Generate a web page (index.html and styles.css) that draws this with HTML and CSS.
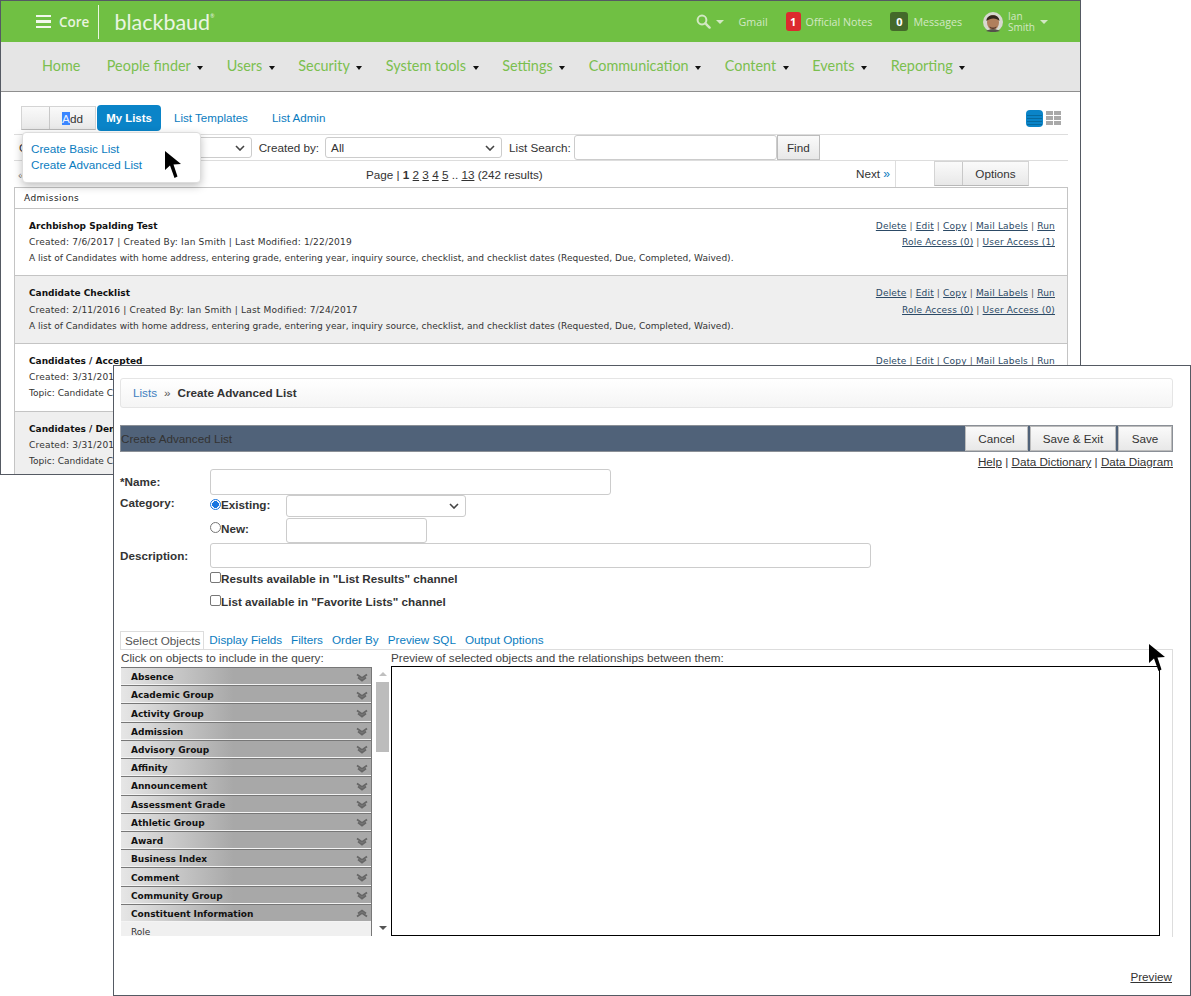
FILE: index.html
```html
<!DOCTYPE html>
<html lang="en">
<head>
  <meta charset="UTF-8" />
  <title>Create Advanced List</title>
  <link rel="stylesheet" href="styles.css">
</head>
<body>
  <div class="window list-window">
    <header class="topbar">
      <div class="brand">
        <span class="burger"><i></i><i></i><i></i></span>
        <span class="core">Core</span>
        <span class="logo">blackbaud<sup>®</sup></span>
      </div>
      <div class="top-tools">
        <svg class="search-icon" width="15" height="15" viewBox="0 0 15 15"><circle cx="6" cy="6" r="4.4" fill="none" stroke="#d3e8c4" stroke-width="2"/><path d="M9.4 9.4L13.6 13.6" stroke="#d3e8c4" stroke-width="2.4" stroke-linecap="round"/></svg>
        <span class="tri light search-tri"></span>
        <span class="top-link gmail">Gmail</span>
        <span class="badge red">1</span>
        <span class="top-link notes">Official Notes</span>
        <span class="badge dark">0</span>
        <span class="top-link msgs">Messages</span>
        <svg class="avatar" width="20" height="20" viewBox="0 0 20 20"><circle cx="10" cy="10" r="10" fill="#d8d8d0"/><ellipse cx="10" cy="10.5" rx="6" ry="7.5" fill="#b07f5c"/><path d="M3.5 9C3 2 16 1 16.5 9C14 5.500 7 5.500 3.500 9Z" fill="#33261d"/><path d="M6.500 14C8 16 12 16 13.500 14L13 16C11 17.500 9 17.500 7 16Z" fill="#5c4030"/><path d="M3 19C6 16.500 14 16.500 17 19C13 20.500 7 20.500 3 19Z" fill="#55514b"/></svg>
        <span class="top-user">Ian<br>Smith</span>
        <span class="tri light"></span>
      </div>
    </header>

    <nav class="mainnav">
      <a>Home</a>
      <a>People finder <b class="tri"></b></a>
      <a>Users <b class="tri"></b></a>
      <a>Security <b class="tri"></b></a>
      <a>System tools <b class="tri"></b></a>
      <a>Settings <b class="tri"></b></a>
      <a>Communication <b class="tri"></b></a>
      <a>Content <b class="tri"></b></a>
      <a>Events <b class="tri"></b></a>
      <a>Reporting <b class="tri"></b></a>
    </nav>

    <div class="list-body">
      <div class="tabs-row">
        <div class="split-btn add-btn"><span class="split-blank"></span><span class="split-label"><mark>A</mark>dd</span></div>
        <a class="tab active">My Lists</a>
        <a class="tab">List Templates</a>
        <a class="tab">List Admin</a>
        <div class="view-icons">
          <svg width="17" height="17" viewBox="0 0 17 17"><rect width="17" height="17" rx="4" fill="#0a84c8"/><path d="M1 5.500H16M1 8.500H16M1 11.500H16M1 14.500H16" stroke="#066a9f"/></svg>
          <svg width="15" height="14" viewBox="0 0 15 14"><path d="M0 0H7V4H0ZM8 0H15V4H8ZM0 5H7V9H0ZM8 5H15V9H8ZM0 10H7V14H0ZM8 10H15V14H8Z" fill="#a9a9a9"/></svg>
        </div>
      </div>

      <div class="filter-row">
        <label class="filter-cat">Category:</label>
        <span class="fake-select cat-select"><svg class="chev" width="10" height="6" viewBox="0 0 10 6"><path d="M1 1L5 5L9 1" fill="none" stroke="#444" stroke-width="1.6"/></svg></span>
        <label class="created-label">Created by:</label>
        <span class="fake-select by-select">All<svg class="chev" width="10" height="6" viewBox="0 0 10 6"><path d="M1 1L5 5L9 1" fill="none" stroke="#444" stroke-width="1.6"/></svg></span>
        <label class="search-label">List Search:</label>
        <span class="fake-input search-input"></span>
        <span class="btn find-btn">Find</span>
      </div>

      <div class="pager-row">
        <span class="prev">«</span>
        <span class="pages">Page | <b>1</b> <u>2</u> <u>3</u> <u>4</u> <u>5</u> .. <u>13</u> (242 results)</span>
        <span class="next">Next <small>»</small></span>
        <span class="pager-side">
          <span class="split-btn options-btn"><span class="split-blank"></span><span class="split-label">Options</span></span>
        </span>
      </div>

      <div class="list-table">
        <div class="group-head">Admissions</div>

        <div class="list-row first">
          <div class="row-text">
            <h4>Archbishop Spalding Test</h4>
            <p class="meta">Created: 7/6/2017 | Created By: Ian Smith | Last Modified: 1/22/2019</p>
            <p>A list of Candidates with home address, entering grade, entering year, inquiry source, checklist, and checklist dates (Requested, Due, Completed, Waived).</p>
          </div>
          <div class="row-links">
            <p><u>Delete</u> | <u>Edit</u> | <u>Copy</u> | <u>Mail Labels</u> | <u>Run</u></p>
            <p><u>Role Access (0)</u> | <u>User Access (1)</u></p>
          </div>
        </div>

        <div class="list-row alt tall">
          <div class="row-text">
            <h4>Candidate Checklist</h4>
            <p class="meta">Created: 2/11/2016 | Created By: Ian Smith | Last Modified: 7/24/2017</p>
            <p>A list of Candidates with home address, entering grade, entering year, inquiry source, checklist, and checklist dates (Requested, Due, Completed, Waived).</p>
          </div>
          <div class="row-links">
            <p><u>Delete</u> | <u>Edit</u> | <u>Copy</u> | <u>Mail Labels</u> | <u>Run</u></p>
            <p><u>Role Access (0)</u> | <u>User Access (0)</u></p>
          </div>
        </div>

        <div class="list-row">
          <div class="row-text">
            <h4>Candidates / Accepted</h4>
            <p class="meta">Created: 3/31/2016 | Created By: Ian Smith</p>
            <p>Topic: Candidate Checklist</p>
          </div>
          <div class="row-links">
            <p><u>Delete</u> | <u>Edit</u> | <u>Copy</u> | <u>Mail Labels</u> | <u>Run</u></p>
          </div>
        </div>

        <div class="list-row alt">
          <div class="row-text">
            <h4>Candidates / Denied</h4>
            <p class="meta">Created: 3/31/2016 | Created By: Ian Smith</p>
            <p>Topic: Candidate Checklist</p>
          </div>
        </div>
      </div>
    </div>

    <div class="add-menu">
      <a>Create Basic List</a>
      <a>Create Advanced List</a>
    </div>
  </div>

  <div class="window create-window">
    <div class="breadcrumb"><a>Lists</a><span class="crumb-sep">»</span><b>Create Advanced List</b></div>

    <div class="title-bar">
      <span class="title-text">Create Advanced List</span>
      <div class="title-btns">
        <span class="btn cancel-btn">Cancel</span>
        <span class="btn exit-btn">Save &amp; Exit</span>
        <span class="btn save-btn">Save</span>
      </div>
    </div>
    <div class="help-links"><u>Help</u> | <u>Data Dictionary</u> | <u>Data Diagram</u></div>

    <form class="create-form">
      <div class="form-row name-row">
        <label>*Name:</label>
        <span class="fake-input name-input"></span>
      </div>
      <div class="form-row category-row">
        <label>Category:</label>
        <div class="category-opts">
          <div class="cat-opt existing-opt">
            <span class="radio on"></span><b>Existing:</b>
            <span class="fake-select existing-select"><svg class="chev" width="10" height="6" viewBox="0 0 10 6"><path d="M1 1L5 5L9 1" fill="none" stroke="#444" stroke-width="1.6"/></svg></span>
          </div>
          <div class="cat-opt new-opt">
            <span class="radio"></span><b>New:</b>
            <span class="fake-input new-input"></span>
          </div>
        </div>
      </div>
      <div class="form-row desc-row">
        <label>Description:</label>
        <span class="fake-input desc-input"></span>
      </div>
      <div class="check-row first"><span class="check"></span>Results available in "List Results" channel</div>
      <div class="check-row"><span class="check"></span>List available in "Favorite Lists" channel</div>
    </form>

    <div class="object-tabs">
      <span class="object-tab active">Select Objects</span>
      <a>Display Fields</a>
      <a>Filters</a>
      <a>Order By</a>
      <a>Preview SQL</a>
      <a>Output Options</a>
    </div>

    <div class="object-panel">
      <div class="panel-labels">
        <span class="left-label">Click on objects to include in the query:</span>
        <span>Preview of selected objects and the relationships between them:</span>
      </div>
      <div class="panel-main">
        <div class="accordion">
          <div class="acc-item">Absence<svg width="12" height="9" viewBox="0 0 12 9"><path d="M1 1.500L6 5L11 1.500M2 4.500L6 7.500L10 4.500" fill="none" stroke="#666" stroke-width="1.8"/></svg></div>
          <div class="acc-item">Academic Group<svg width="12" height="9" viewBox="0 0 12 9"><path d="M1 1.500L6 5L11 1.500M2 4.500L6 7.500L10 4.500" fill="none" stroke="#666" stroke-width="1.8"/></svg></div>
          <div class="acc-item">Activity Group<svg width="12" height="9" viewBox="0 0 12 9"><path d="M1 1.500L6 5L11 1.500M2 4.500L6 7.500L10 4.500" fill="none" stroke="#666" stroke-width="1.8"/></svg></div>
          <div class="acc-item">Admission<svg width="12" height="9" viewBox="0 0 12 9"><path d="M1 1.500L6 5L11 1.500M2 4.500L6 7.500L10 4.500" fill="none" stroke="#666" stroke-width="1.8"/></svg></div>
          <div class="acc-item">Advisory Group<svg width="12" height="9" viewBox="0 0 12 9"><path d="M1 1.500L6 5L11 1.500M2 4.500L6 7.500L10 4.500" fill="none" stroke="#666" stroke-width="1.8"/></svg></div>
          <div class="acc-item">Affinity<svg width="12" height="9" viewBox="0 0 12 9"><path d="M1 1.500L6 5L11 1.500M2 4.500L6 7.500L10 4.500" fill="none" stroke="#666" stroke-width="1.8"/></svg></div>
          <div class="acc-item">Announcement<svg width="12" height="9" viewBox="0 0 12 9"><path d="M1 1.500L6 5L11 1.500M2 4.500L6 7.500L10 4.500" fill="none" stroke="#666" stroke-width="1.8"/></svg></div>
          <div class="acc-item">Assessment Grade<svg width="12" height="9" viewBox="0 0 12 9"><path d="M1 1.500L6 5L11 1.500M2 4.500L6 7.500L10 4.500" fill="none" stroke="#666" stroke-width="1.8"/></svg></div>
          <div class="acc-item">Athletic Group<svg width="12" height="9" viewBox="0 0 12 9"><path d="M1 1.500L6 5L11 1.500M2 4.500L6 7.500L10 4.500" fill="none" stroke="#666" stroke-width="1.8"/></svg></div>
          <div class="acc-item">Award<svg width="12" height="9" viewBox="0 0 12 9"><path d="M1 1.500L6 5L11 1.500M2 4.500L6 7.500L10 4.500" fill="none" stroke="#666" stroke-width="1.8"/></svg></div>
          <div class="acc-item">Business Index<svg width="12" height="9" viewBox="0 0 12 9"><path d="M1 1.500L6 5L11 1.500M2 4.500L6 7.500L10 4.500" fill="none" stroke="#666" stroke-width="1.8"/></svg></div>
          <div class="acc-item">Comment<svg width="12" height="9" viewBox="0 0 12 9"><path d="M1 1.500L6 5L11 1.500M2 4.500L6 7.500L10 4.500" fill="none" stroke="#666" stroke-width="1.8"/></svg></div>
          <div class="acc-item">Community Group<svg width="12" height="9" viewBox="0 0 12 9"><path d="M1 1.500L6 5L11 1.500M2 4.500L6 7.500L10 4.500" fill="none" stroke="#666" stroke-width="1.8"/></svg></div>
          <div class="acc-item">Constituent Information<svg width="12" height="9" viewBox="0 0 12 9"><path d="M1 7.500L6 4L11 7.500M2 4.500L6 1.500L10 4.500" fill="none" stroke="#666" stroke-width="1.8"/></svg></div>
          <div class="acc-sub">Role</div>
        </div>
        <div class="scrollbar">
          <span class="scroll-up"></span>
          <span class="scroll-thumb"></span>
          <span class="scroll-down"></span>
        </div>
        <div class="preview-box"></div>
      </div>
    </div>

    <div class="preview-link"><u>Preview</u></div>
  </div>

  <svg class="cursor cursor-menu" width="18" height="29" viewBox="0 0 18 29"><path d="M1 1L1 20L6 15.500L10.500 28L13.500 26.500L9.500 14.500L17 14Z" fill="#000"/></svg>
  <svg class="cursor cursor-panel" width="18" height="29" viewBox="0 0 18 29"><path d="M1 1L1 20L6 15.500L10.500 28L13.500 26.500L9.500 14.500L17 14Z" fill="#000"/></svg>
</body>
</html>
```

FILE: styles.css
```css
* {
  box-sizing: border-box;
}

html, body {
  margin: 0;
  height: 996px;
  overflow: hidden;
  background: #fff;
}

body {
  position: relative;
  font-family: 'Liberation Sans', Arial, sans-serif;
  font-size: 11.7px;
  color: #333;
}

p, h4 {
  margin: 0;
}

.window {
  position: absolute;
  background: #fff;
  border: 1px solid #555a63;
}

.list-window {
  left: 0;
  top: 0;
  width: 1081px;
  height: 475px;
  overflow: hidden;
}

.create-window {
  left: 113px;
  top: 365px;
  width: 1078px;
  height: 631px;
  padding: 12px 17px 0 6px;
  z-index: 2;
}

/* top green bar */
.topbar {
  height: 41px;
  background: #70c043;
  display: flex;
  align-items: center;
  justify-content: space-between;
  color: #fff;
}

.brand {
  display: flex;
  align-items: center;
  padding-left: 35px;
  height: 100%;
}

.burger {
  display: flex;
  flex-direction: column;
  gap: 3px;
  width: 15px;
}

.burger i {
  height: 2.5px;
  background: #f2f8ec;
}

.core {
  font-family: 'Open Sans', sans-serif;
  font-weight: 600;
  font-size: 13.5px;
  color: #e8f4df;
  margin-left: 8px;
  padding-right: 9px;
  border-right: 1px solid #eaf5e2;
  height: 34px;
  line-height: 34px;
}

.logo {
  font-family: Lato, sans-serif;
  font-weight: 400;
  font-size: 21.5px;
  color: #eaf5e2;
  margin-left: 15px;
}

.logo sup {
  font-size: 5px;
  vertical-align: 12px;
  line-height: 0;
}

.top-tools {
  display: flex;
  align-items: center;
  padding-right: 32px;
  font-family: 'Open Sans', sans-serif;
}

.top-link {
  font-size: 10.7px;
  color: #d3e8c4;
}

.tri {
  display: inline-block;
  width: 0;
  height: 0;
  border-left: 3.5px solid transparent;
  border-right: 3.5px solid transparent;
  border-top: 4px solid #111;
  vertical-align: 1px;
  margin-left: 3px;
}

.tri.light {
  border-top-color: #d3e8c4;
  border-left-width: 4px;
  border-right-width: 4px;
}

.search-tri {
  margin-left: 5px;
}

.gmail {
  margin-left: 15px;
}

.badge {
  width: 15px;
  height: 19px;
  border-radius: 3px;
  color: #fff;
  font-size: 11px;
  font-weight: 700;
  display: flex;
  align-items: center;
  justify-content: center;
}

.badge.red {
  background: #dc2a2e;
  margin-left: 18px;
}

.badge.dark {
  background: #44692a;
  width: 18px;
  margin-left: 18px;
}

.notes, .msgs {
  margin-left: 5px;
}

.avatar {
  margin-left: 21px;
}

.top-user {
  font-size: 10px;
  line-height: 11px;
  color: #d3e8c4;
  margin-left: 5px;
  margin-right: 2px;
}

/* grey nav */
.mainnav {
  height: 50px;
  background: #e5e5e5;
  border-bottom: 1px solid #8f8f8f;
  display: flex;
  align-items: center;
  gap: 23.5px;
  padding: 0 0 3px 41px;
  font-family: Lato, sans-serif;
  font-size: 14.4px;
  color: #7bbf4f;
}

.mainnav a:first-child {
  margin-right: 3px;
}

/* list page */
.list-body {
  padding: 13px 12px 0 13px;
}

.tabs-row {
  display: flex;
  align-items: center;
  height: 26px;
  padding-left: 7px;
}

.split-btn {
  display: flex;
  background: linear-gradient(#fafafa, #e8e8e8);
  border: 1px solid #d4d4d4;
  border-bottom-color: #b8b8b8;
  height: 24px;
}

.split-blank {
  width: 28px;
  border-right: 1px solid #c8c8c8;
}

.split-label {
  flex: 1;
  display: flex;
  align-items: center;
  justify-content: center;
}

.add-btn {
  width: 75px;
}

mark {
  background: #3a86ff;
  color: #e8f0ff;
}

.tab {
  color: #0a7cc0;
  padding: 0 12px;
  line-height: 26px;
  height: 26px;
  font-size: 11.6px;
}

.tab.active {
  background: #0a84c8;
  color: #fff;
  font-weight: 700;
  font-size: 11.4px;
  border-radius: 4px;
  width: 64px;
  padding: 0;
  text-align: center;
  margin: 0 1px;
}

.view-icons {
  margin-left: auto;
  padding-right: 7px;
  display: flex;
  align-items: center;
  gap: 3px;
}

.filter-row {
  margin-top: 3px;
  height: 27px;
  border-top: 1px solid #ddd;
  border-bottom: 1px solid #ddd;
  display: flex;
  align-items: center;
  padding: 0 0 1px 5px;
}

.fake-select, .fake-input {
  display: flex;
  align-items: center;
  position: relative;
  background: #fff;
  border: 1px solid #ccc;
  border-radius: 3px;
}

.fake-select {
  height: 21px;
  padding-left: 5px;
}

.chev {
  position: absolute;
  right: 6px;
  top: 7px;
}

.cat-select {
  width: 177px;
  margin-left: 5px;
}

.created-label {
  margin-left: 7px;
}

.by-select {
  width: 177px;
  margin-left: 6px;
}

.search-label {
  margin-left: 7px;
}

.search-input {
  width: 203px;
  height: 25px;
  margin-left: 3px;
}

.btn {
  display: flex;
  align-items: center;
  justify-content: center;
  background: linear-gradient(#fafafa, #e8e8e8);
  border: 1px solid #bcbcbc;
}

.find-btn {
  width: 43px;
  height: 25px;
}

.pager-row {
  height: 26px;
  display: flex;
  align-items: center;
  position: relative;
}

.prev {
  color: #888;
  margin-left: 4px;
}

.pages {
  position: absolute;
  left: 352px;
}

.next {
  position: absolute;
  left: 842px;
}

.next small {
  color: #0a7cc0;
  font-size: 12px;
}

.pager-side {
  position: absolute;
  left: 881px;
  top: 0;
  height: 26px;
  border-left: 1px solid #ddd;
  padding-left: 38px;
}

.options-btn {
  width: 95px;
  height: 25px;
}

.list-table {
  border: 1px solid #c4c4c4;
}

.group-head {
  height: 21px;
  line-height: 20px;
  border-bottom: 1px solid #c4c4c4;
  padding-left: 9px;
  font-family: 'DejaVu Sans', sans-serif;
  font-size: 9px;
  letter-spacing: 0.45px;
  color: #222;
}

.list-row {
  height: 68px;
  padding: 9px 12px 0 14px;
  border-bottom: 1px solid #c4c4c4;
  display: flex;
  justify-content: space-between;
  font-family: 'DejaVu Sans', sans-serif;
  font-size: 9.05px;
  line-height: 16px;
  color: #333;
}

.list-row.first {
  height: 67px;
}

.list-row.alt {
  background: #efefef;
}

.list-row.tall h4,
.list-row.tall .row-links p:first-child {
  margin-bottom: 1px;
}

.list-row h4 {
  font-size: 9px;
  font-weight: 700;
  color: #111;
}

.meta {
  letter-spacing: 0.17px;
}

.row-links {
  text-align: right;
  color: #555;
  letter-spacing: 0.15px;
}

.row-links u {
  color: #2c4a66;
}

/* add dropdown */
.add-menu {
  position: absolute;
  left: 21px;
  top: 131px;
  width: 179px;
  height: 51px;
  background: #fff;
  border: 1px solid #ddd;
  border-radius: 4px;
  box-shadow: 0 3px 8px rgba(0, 0, 0, 0.25);
  padding: 9px 8px;
  display: flex;
  flex-direction: column;
  gap: 2px;
  color: #0a7cc0;
  line-height: 14px;
}

/* create window */
.breadcrumb {
  height: 30px;
  border: 1px solid #e5e5e5;
  border-radius: 3px;
  background: linear-gradient(#fff, #f5f5f5);
  display: flex;
  align-items: center;
  padding: 0 0 1px 12px;
}

.breadcrumb a {
  color: #3d7fc0;
}

.crumb-sep {
  margin: 0 7px;
  color: #555;
}

.title-bar {
  margin-top: 17px;
  height: 27px;
  background: #506279;
  border: 1px solid #8a8f96;
  display: flex;
  align-items: center;
  justify-content: space-between;
  color: #333;
}

.title-text {
  margin-top: -1px;
}

.title-btns {
  display: flex;
  gap: 2px;
  height: 25px;
}

.cancel-btn {
  width: 63px;
}

.exit-btn {
  width: 86px;
}

.save-btn {
  width: 54px;
}

.help-links {
  text-align: right;
  margin-top: 2px;
  line-height: 15px;
  color: #333;
}

.create-form {
  font-weight: 700;
  color: #333;
}

.form-row {
  display: flex;
}

.form-row > label {
  width: 90px;
  flex: none;
}

.name-row {
  height: 25px;
  align-items: center;
}

.name-input {
  width: 401px;
  height: 26px;
}

.category-row {
  height: 49px;
}

.category-row > label {
  padding-top: 2px;
}

.category-opts {
  flex: 1;
}

.cat-opt {
  display: flex;
  align-items: center;
}

.cat-opt b {
  width: 65px;
}

.radio {
  width: 11px;
  height: 11px;
  border-radius: 50%;
  border: 1px solid #777;
  background: #fff;
  margin-top: -3px;
}

.radio.on {
  border-color: #1976e0;
  background: radial-gradient(#1976e0 50%, #fff 56%);
}

.existing-opt {
  height: 23px;
}

.existing-opt b {
  margin-top: -2px;
}

.existing-select {
  width: 180px;
  height: 22px;
}

.new-opt {
  height: 25px;
  margin-top: 1px;
}

.new-opt b {
  margin-top: -4px;
}

.new-opt .radio {
  margin-top: -6px;
}

.new-input {
  width: 141px;
  height: 25px;
}

.desc-row {
  height: 25px;
  align-items: center;
}

.desc-input {
  width: 661px;
  height: 25px;
}

.check-row {
  display: flex;
  align-items: center;
  padding-left: 90px;
  height: 23px;
}

.check-row.first {
  margin-top: -1px;
}

.check {
  width: 11px;
  height: 11px;
  border: 1px solid #777;
  border-radius: 2px;
  background: #fff;
  margin-top: -3px;
}

.object-tabs {
  margin-top: 18px;
  display: flex;
  align-items: center;
  height: 18px;
  gap: 9px;
  color: #0a7cc0;
}

.object-tabs a {
  margin-top: -2px;
}

.object-tab.active {
  border: 1px solid #ddd;
  border-bottom: none;
  height: 18px;
  line-height: 17px;
  padding: 0 3px 0 4px;
  color: #555;
  margin-right: -4px;
}

.object-panel {
  border-top: 1px solid #ddd;
  border-right: 1px solid #ddd;
  height: 288px;
  overflow: hidden;
}

.panel-labels {
  height: 16px;
  line-height: 16px;
  display: flex;
  color: #444;
  padding-left: 1px;
}

.left-label {
  width: 270px;
}

.panel-main {
  display: flex;
  height: 270px;
}

.accordion {
  width: 251px;
  margin: 1px 0 0 1px;
  height: 269px;
  overflow: hidden;
  background: #f0f0f0;
  border-right: 1px solid #777;
  font-family: 'DejaVu Sans', sans-serif;
  font-size: 9px;
}

.acc-item {
  height: 18.23px;
  display: flex;
  align-items: center;
  justify-content: space-between;
  padding: 2px 3px 0 10px;
  font-weight: 700;
  color: #111;
  background: linear-gradient(90deg, #e6e6e6, #a8a8a8 45%);
  border-top: 1px solid #777;
  border-bottom: 1px solid #f4f4f4;
}

.acc-sub {
  padding: 5px 10px;
  font-size: 9px;
  color: #333;
}

.scrollbar {
  width: 17px;
  margin-left: 2px;
  display: flex;
  flex-direction: column;
  align-items: center;
  background: #fff;
  position: relative;
  height: 270px;
}

.scroll-up {
  margin-top: 6px;
  border-left: 4px solid transparent;
  border-right: 4px solid transparent;
  border-bottom: 4px solid #c0c0c0;
}

.scroll-thumb {
  width: 13px;
  height: 70px;
  background: #bcbcbc;
  margin-top: 6px;
}

.scroll-down {
  position: absolute;
  bottom: 6px;
  border-left: 4px solid transparent;
  border-right: 4px solid transparent;
  border-top: 4px solid #555;
}

.preview-box {
  width: 769px;
  height: 270px;
  border: 1px solid #000;
  background: #fff;
}

.preview-link {
  position: absolute;
  right: 18px;
  bottom: 12px;
  color: #333;
}

/* mouse pointers in the capture */
.cursor {
  position: absolute;
  z-index: 5;
}

.cursor-menu {
  left: 164px;
  top: 150px;
}

.cursor-panel {
  left: 1148px;
  top: 643px;
}
```
